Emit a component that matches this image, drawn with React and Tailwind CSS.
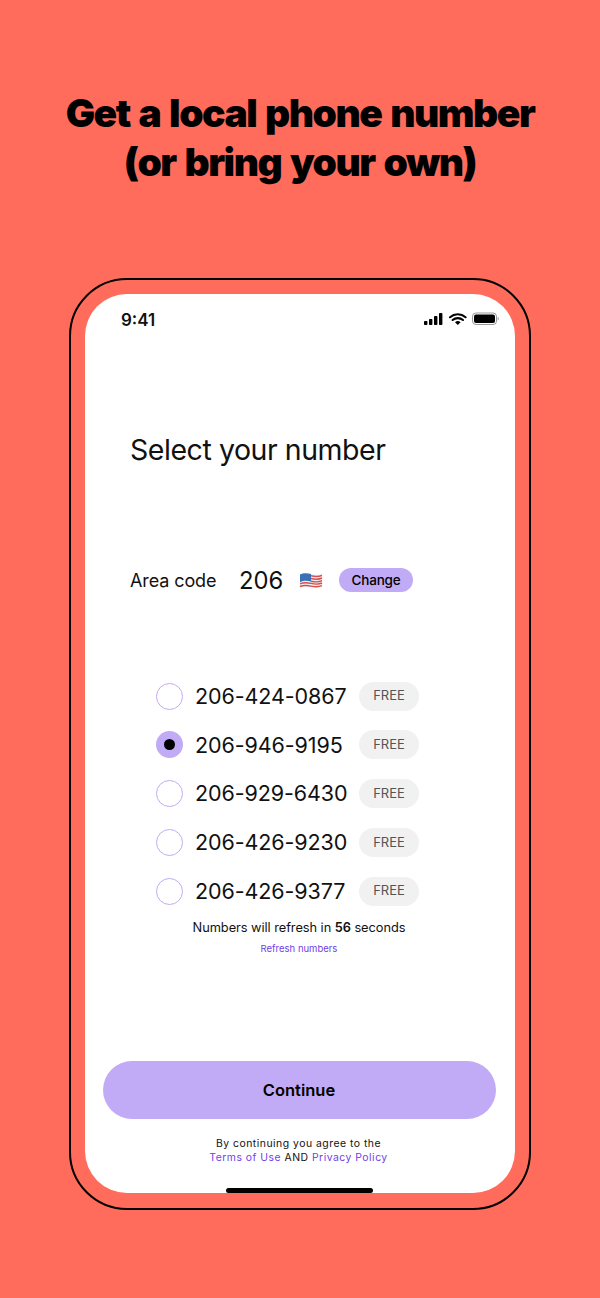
import React from 'react';

const numbers = [
  { value: '206-424-0867', selected: false },
  { value: '206-946-9195', selected: true },
  { value: '206-929-6430', selected: false },
  { value: '206-426-9230', selected: false },
  { value: '206-426-9377', selected: false },
];

function StatusIcons() {
  return (
    <svg className="mb-[2px]" width="75" height="14" viewBox="0 0 75 14" fill="none">
      <rect x="0" y="9" width="3.4" height="4" rx="0.8" fill="#000" />
      <rect x="5" y="7" width="3.4" height="6" rx="0.8" fill="#000" />
      <rect x="10" y="4" width="3.4" height="9" rx="0.8" fill="#000" />
      <rect x="15" y="1" width="3.4" height="12" rx="0.8" fill="#000" />
      <path d="M26 5.2a12 12 0 0 1 15.6 0M28.600 8a8 8 0 0 1 10.400 0" stroke="#000" strokeWidth="2.1" strokeLinecap="round" />
      <path d="M31 10.2a4.2 4.2 0 0 1 5.600 0L33.800 13z" fill="#000" />
      <rect x="48.5" y="1" width="24" height="11.5" rx="3.4" stroke="#000" strokeOpacity="0.4" />
      <rect x="50" y="2.5" width="21" height="8.5" rx="2" fill="#000" />
      <path d="M73.600 5v3.500c.8-.3 1.200-1 1.200-1.700s-.4-1.500-1.200-1.800z" fill="#000" fillOpacity="0.4" />
    </svg>
  );
}

function Flag() {
  return (
    <svg width="24" height="19" viewBox="0 0 24 18">
      <path d="M1 3C5 1 8 1.500 12 2.500s8 1 11-.5v13c-3 1.500-7 1.500-11 .5s-7-1.500-11 .5z" fill="#eceef2" />
      <path d="M12 4.300c4 1 8 1 11-.5M12 7c4 1 8 1 11-.5M12 9.700c4 1 8 1 11-.5M1 12.300c4-1.800 7-1.300 11-.4s8 1 11-.4M1 15c4-1.800 7-1.300 11-.4s8 1 11-.4" stroke="#d8504d" strokeWidth="1.400" fill="none" />
      <path d="M1 3C4.500 1.300 8 1.500 12 2.500v7.500C8 9 4.500 9 1 10.700z" fill="#3a70b5" />
    </svg>
  );
}

function NumberRow({ value, selected }) {
  return (
    <div className="flex h-[48.75px] items-center">
      {selected ? (
        <div className="flex h-[27px] w-[27px] items-center justify-center rounded-full bg-[#c1aaf6]">
          <div className="h-[11px] w-[11px] rounded-full bg-black" />
        </div>
      ) : (
        <div className="h-[27px] w-[27px] rounded-full border-[1.5px] border-[#c1aaf6] bg-white" />
      )}
      <span className="ml-[12px] w-[164px] text-[21.500px] tracking-[-0.1px] text-[#111]">{value}</span>
      <span className="flex h-[29px] w-[60px] items-center justify-center rounded-full bg-[#f1f1f1] text-[13px] text-[#555]">
        FREE
      </span>
    </div>
  );
}

export default function App() {
  return (
    <div className="flex h-[1298px] w-[600px] flex-col items-center overflow-hidden bg-[#ff6c5c] pt-[88px] font-['Inter',sans-serif]">
      <h1 className="text-center text-[39px] leading-[49px] font-black tracking-[-1.5px] [word-spacing:2.5px] text-black">
        Get a local phone number
        <br />
        (or bring your own)
      </h1>

      {/* phone frame */}
      <div className="mt-[92px] h-[932px] w-[462px] rounded-[58px] border-[2.500px] border-black p-[14px]">
        <div className="flex h-[899px] flex-col rounded-[42px] bg-white">
          <div className="flex items-center justify-between pt-[16px] pr-[16px] pl-[36px]">
            <span className="text-[17px] leading-[20px] font-semibold text-[#111]">9:41</span>
            <StatusIcons />
          </div>

          <h2 className="mt-[101px] ml-[45px] text-[28.500px] leading-[38px] tracking-[-0.45px] text-[#111]">Select your number</h2>

          <div className="mt-[94px] ml-[45px] flex items-center">
            <span className="w-[109px] text-[18px] tracking-[-0.1px] text-[#111]">Area code</span>
            <span className="w-[60px] text-[23.800px] text-[#111]">206</span>
            <Flag />
            <span className="mb-[2px] ml-[16px] flex h-[24px] w-[74px] items-center justify-center rounded-full bg-[#c1aaf6] text-[13.500px] font-medium tracking-[-0.2px] text-black">
              Change
            </span>
          </div>

          <div className="mt-[73px] ml-[71px]">
            {numbers.map((n) => (
              <NumberRow key={n.value} value={n.value} selected={n.selected} />
            ))}
          </div>

          <p className="mt-[3px] pr-[2px] text-center text-[12.800px] leading-[20px] tracking-[-0.05px] text-[#111]">
            Numbers will refresh in <span className="font-semibold">56</span> seconds
          </p>
          <p className="mt-[4px] pr-[2px] text-center text-[9.500px] leading-[14px] text-[#6f42e8]">Refresh numbers</p>

          <button className="mt-[105px] mr-[19px] ml-[18px] h-[58px] rounded-full bg-[#c1aaf6] pr-[1px] text-[16.500px] font-semibold text-black">
            Continue
          </button>

          <p className="mt-[18px] pr-[3px] text-center text-[10.400px] leading-[14px] tracking-[0.5px] text-[#111]">
            By continuing you agree to the
            <br />
            <span className="text-[#6f42e8]">Terms of Use</span> AND <span className="text-[#6f42e8]">Privacy Policy</span>
          </p>

          <div className="mt-auto ml-[141px] h-[5px] w-[147px] rounded-full bg-black" />
        </div>
      </div>
    </div>
  );
}
